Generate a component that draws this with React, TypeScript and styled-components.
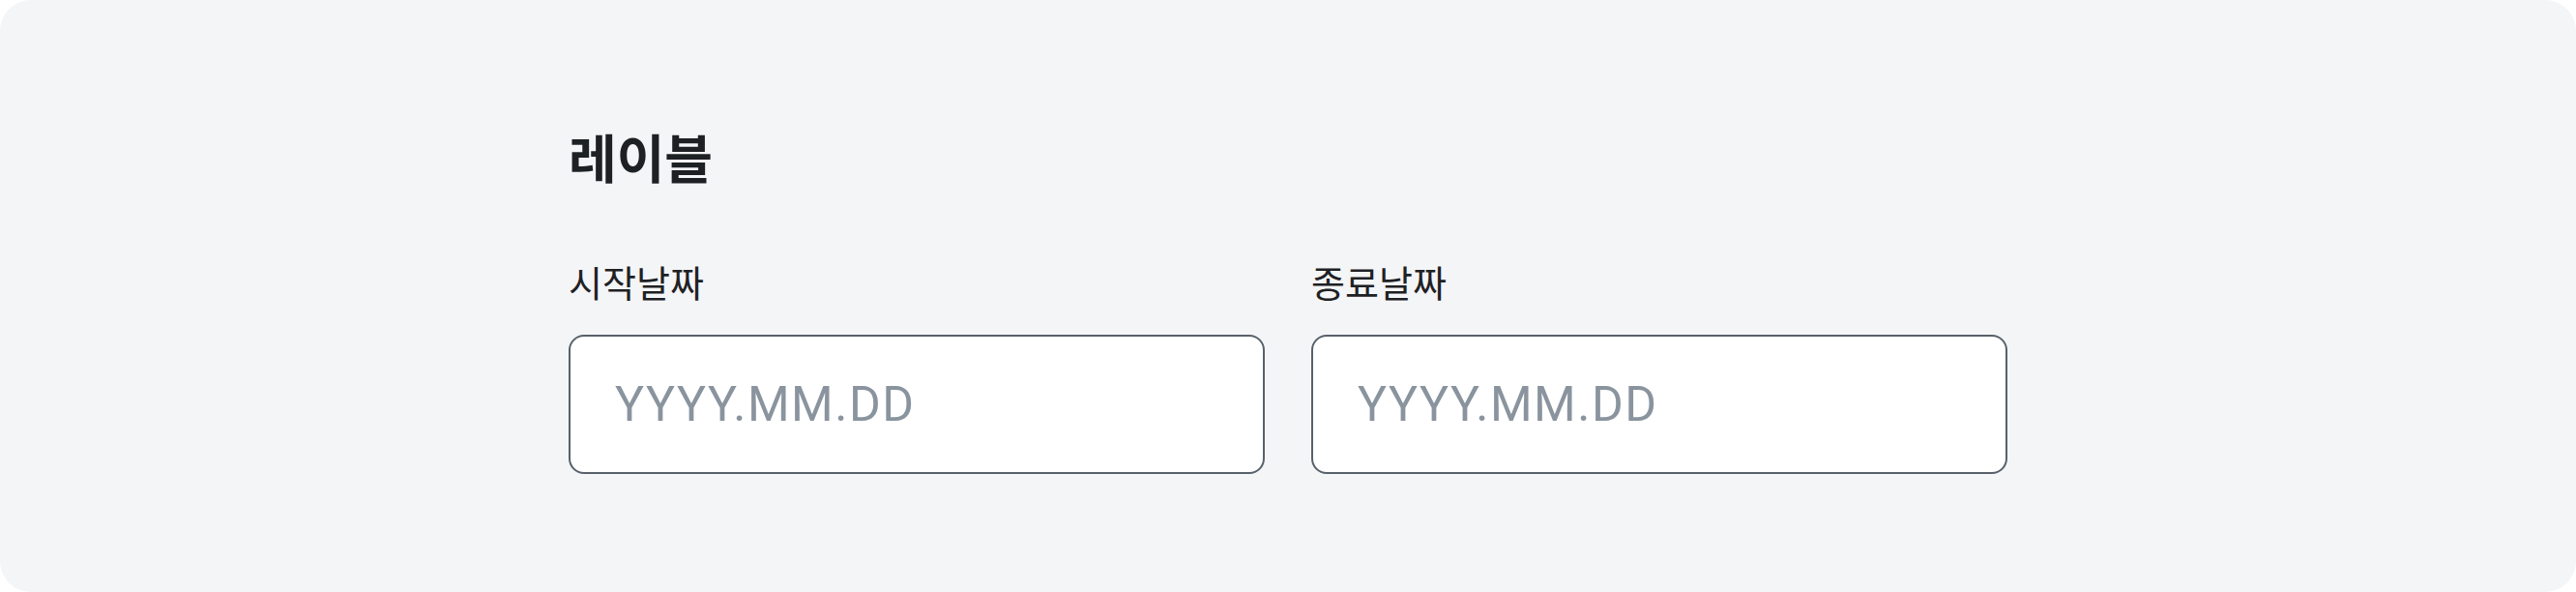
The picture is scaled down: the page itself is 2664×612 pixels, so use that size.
import * as React from 'react'
import styled, { createGlobalStyle } from 'styled-components'

const GlobalStyle = createGlobalStyle`
  html, body {
    margin: 0;
    padding: 0;
    background: #ffffff;
  }
  body {
    font-family: Roboto, "Noto Sans CJK KR", sans-serif;
  }
`

type DateFieldProps = {
  label: string
  placeholder?: string
}

const DateField: React.FC<DateFieldProps> = ({ label, placeholder = 'YYYY.MM.DD' }) => {
  return (
    <FieldContainer>
      <FieldLabel>{label}</FieldLabel>
      <DateInput type={'text'} placeholder={placeholder} />
    </FieldContainer>
  )
}

const App: React.FC = () => {
  return (
    <>
      <GlobalStyle />
      <Page>
        <Content>
          <Title>레이블</Title>
          <FieldRow>
            <DateField label={'시작날짜'} />
            <DateField label={'종료날짜'} />
          </FieldRow>
        </Content>
      </Page>
    </>
  )
}

export default App

const Page = styled.div`
  width: 2664px;
  height: 612px;
  background-color: #f4f5f7;
  border-radius: 32px;
  box-sizing: border-box;
  padding-top: 124px;
`

const Content = styled.div`
  width: 1488px;
  margin: 0 auto;
  display: flex;
  flex-direction: column;
`

const Title = styled.h2`
  margin: 0 0 62px 0;
  font-family: "Noto Sans CJK KR", sans-serif;
  font-size: 54px;
  line-height: 1.4;
  font-weight: 700;
  color: #1e2124;
`

const FieldRow = styled.div`
  display: grid;
  grid-template-columns: 1fr 1fr;
  gap: 48px;
`

const FieldContainer = styled.div`
  display: flex;
  flex-direction: column;
  gap: 27px;
`

const FieldLabel = styled.label`
  font-family: "Noto Sans CJK KR", sans-serif;
  font-size: 38px;
  line-height: 1.5;
  font-weight: 400;
  color: #1e2124;
`

const DateInput = styled.input`
  box-sizing: border-box;
  width: 100%;
  height: 144px;
  padding: 0 46px;
  border: 2px solid #58616a;
  border-radius: 16px;
  background: #ffffff;
  outline: none;
  font-family: Roboto, sans-serif;
  font-size: 50px;
  letter-spacing: 1.5px;
  color: #1e2124;

  &::placeholder {
    color: #8a949e;
  }
`
